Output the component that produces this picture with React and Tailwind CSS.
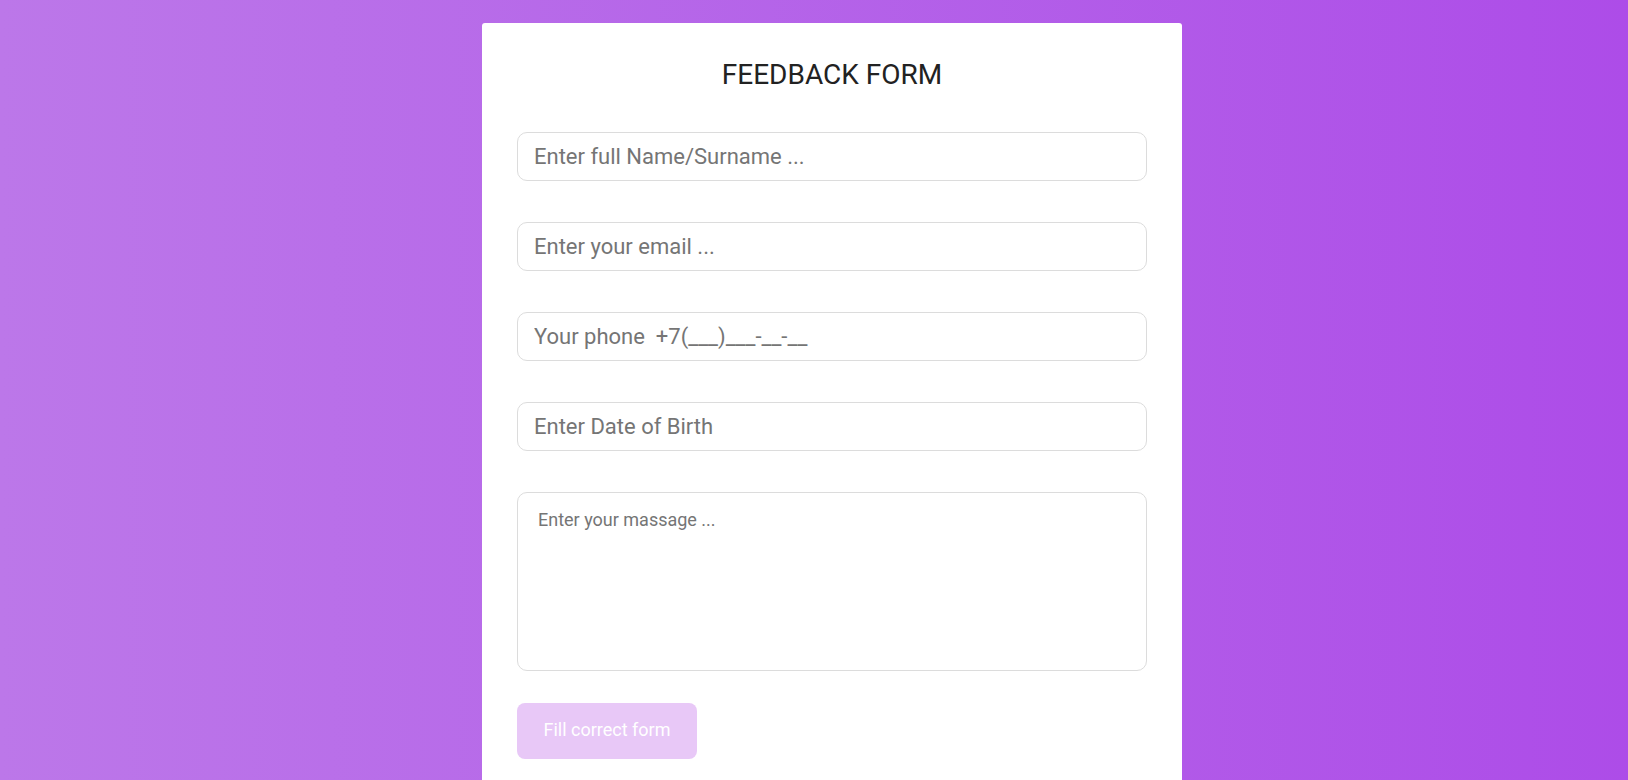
import { useState } from "react"

const FIELDS = [
  { name: "name", placeholder: "Enter full Name/Surname ..." },
  { name: "email", placeholder: "Enter your email ..." },
  { name: "phone", placeholder: "Your phone  +7(___)___-__-__" },
  { name: "birth", placeholder: "Enter Date of Birth" },
]

export default function App() {
  const [form, setForm] = useState({ name: "", email: "", phone: "", birth: "", message: "" })

  const update = (e) => setForm({ ...form, [e.target.name]: e.target.value })

  return (
    <div className="min-h-screen flex justify-center pl-[36px] bg-linear-to-r from-[#bc77e9] to-[#ad4ce8] font-['Roboto',sans-serif] pt-[23px]">
      {/* CARD */}
      <div className="w-[700px] bg-white rounded-t-[3px] px-[35px] pt-[36px] pb-[40px]">
        <h1 className="text-center text-[28px] leading-[32px] text-[#222] font-normal mb-[41px]">
          FEEDBACK FORM
        </h1>

        <div className="flex flex-col gap-[41px]">
          {FIELDS.map((f) => (
            <input
              key={f.name}
              name={f.name}
              value={form[f.name]}
              onChange={update}
              placeholder={f.placeholder}
              className="h-[49px] w-full border border-[#dcdcdc] rounded-[10px] px-[16px] text-[22px] text-[#333] placeholder-[#757575] outline-none"
            />
          ))}

          <textarea
            name="message"
            value={form.message}
            onChange={update}
            placeholder="Enter your massage ..."
            className="h-[179px] w-full border border-[#dcdcdc] rounded-[10px] px-[20px] pt-[13px] pb-[15px] text-[18px] text-[#333] placeholder-[#757575] outline-none resize-none"
          />
        </div>

        <button
          disabled
          className="mt-[32px] w-[180px] h-[56px] rounded-[8px] bg-[#e8c8f7] text-white text-[18px] leading-[24px] pb-[2px]"
        >
          Fill correct form
        </button>
      </div>
    </div>
  )
}
